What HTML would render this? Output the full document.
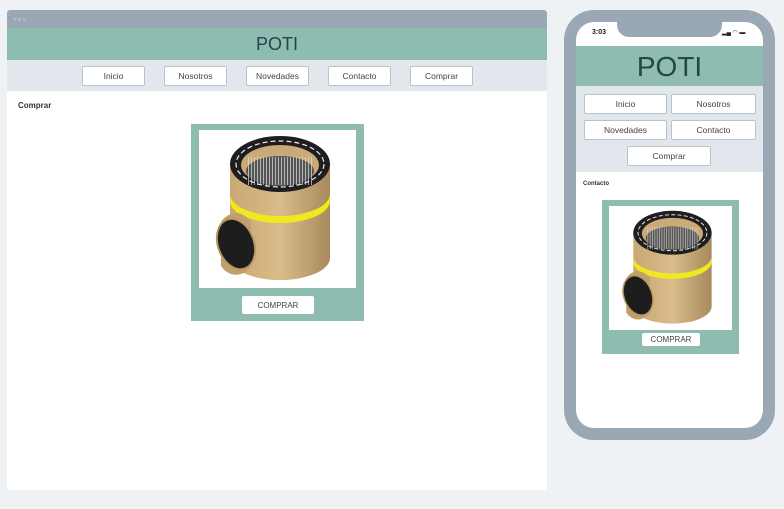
<!DOCTYPE html><html><head><style>
*{margin:0;padding:0;box-sizing:border-box}
body{width:784px;height:509px;background:#eef2f5;position:relative;font-family:"Liberation Sans",sans-serif;overflow:hidden;color:#333}
.a{position:absolute}
.btn{position:absolute;background:#fff;border:1px solid #b9c1ca;border-radius:2px;font-size:8.5px;color:#444;display:flex;align-items:center;justify-content:center;font-family:"Liberation Sans Narrow","Liberation Sans",sans-serif}
</style></head><body>
<svg width="0" height="0" style="position:absolute"><defs>
<linearGradient id="g" x1="0" x2="1"><stop offset="0" stop-color="#c9a874"/><stop offset=".5" stop-color="#d9bc8a"/><stop offset="1" stop-color="#a88a5c"/></linearGradient>
<symbol id="pipe" viewBox="0 0 157 158">
<path d="M31 34 V128 A50 22 0 0 0 131 128 V34 Z" fill="url(#g)"/>
<path d="M31 64 A50 22 0 0 0 131 64 V71 A50 22 0 0 1 31 71Z" fill="#f1e920"/>
<ellipse cx="81" cy="34" rx="50" ry="28" fill="#1e1e1e"/>
<ellipse cx="81" cy="34" rx="44" ry="23" fill="none" stroke="#eee" stroke-width="1.2" stroke-dasharray="5 3"/>
<ellipse cx="81" cy="35" rx="39" ry="20" fill="#c9aa78"/>
<ellipse cx="81" cy="41" rx="34" ry="15" fill="#555" />
<path d="M49 41 H113" stroke="#ddd" stroke-width="28" stroke-dasharray="1 2" opacity=".7"/>
<path d="M22 92 A20 26 0 0 1 52 92 V136 A20 26 0 0 1 22 136Z" fill="#c2a06c"/>
<ellipse cx="37" cy="114" rx="18" ry="26" transform="rotate(-20 37 114)" fill="#1d1d1d" stroke="#b89866" stroke-width="2"/>
</symbol></defs></svg>

<!-- desktop -->
<div class="a" style="left:7px;top:10px;width:540px;height:480px;background:#fff;border-radius:3px;overflow:hidden">
<div class="a" style="left:0;top:0;width:540px;height:18px;background:#9aa8b5"></div>
<div class="a" style="left:6px;top:7px;font-size:6px;color:#b5c0ca;letter-spacing:1px">●●●</div>
<div class="a" style="left:0;top:18px;width:540px;height:32px;background:#8fbcb0;text-align:center;font-size:18px;line-height:32px;color:#23464a">POTI</div>
<div class="a" style="left:0;top:50px;width:540px;height:31px;background:#e2e7ee"></div>
<div class="a" style="left:11px;top:91px;font-size:8px;font-weight:bold;color:#333">Comprar</div>
</div>
<div class="btn" style="left:82px;top:66px;width:63px;height:20px">Inicio</div>
<div class="btn" style="left:164px;top:66px;width:63px;height:20px">Nosotros</div>
<div class="btn" style="left:246px;top:66px;width:63px;height:20px">Novedades</div>
<div class="btn" style="left:328px;top:66px;width:63px;height:20px">Contacto</div>
<div class="btn" style="left:410px;top:66px;width:63px;height:20px">Comprar</div>
<div class="a" style="left:191px;top:124px;width:173px;height:197px;background:#8fbcb0"></div>
<div class="a" style="left:199px;top:130px;width:157px;height:158px;background:#fff"><svg width="157" height="158"><use href="#pipe"/></svg></div>
<div class="btn" style="left:242px;top:296px;width:72px;height:18px;border:none;font-size:8px">COMPRAR</div>

<!-- phone -->
<div class="a" style="left:564px;top:10px;width:211px;height:430px;background:#9aa8b5;border-radius:30px"></div>
<div class="a" style="left:576px;top:22px;width:187px;height:406px;background:#fff;border-radius:18px;overflow:hidden">
<div class="a" style="left:41px;top:0;width:105px;height:15px;background:#9aa8b5;border-radius:0 0 12px 12px"></div>
<div class="a" style="left:16px;top:7px;font-size:7px;font-weight:bold;color:#222">3:03</div>
<div class="a" style="left:146px;top:7px;font-size:6px;color:#222">▂▄ ◠ ▬</div>
<div class="a" style="left:0;top:24px;width:187px;height:40px;background:#8fbcb0;text-align:center;font-size:28px;line-height:42px;color:#23464a">POTI</div>
<div class="a" style="left:0;top:64px;width:187px;height:86px;background:#e2e7ee"></div>
<div class="a" style="left:7px;top:159px;font-size:6px;font-weight:bold;color:#333">Contacto</div>
</div>
<div class="btn" style="left:584px;top:94px;width:83px;height:20px">Inicio</div>
<div class="btn" style="left:671px;top:94px;width:85px;height:20px">Nosotros</div>
<div class="btn" style="left:584px;top:120px;width:83px;height:20px">Novedades</div>
<div class="btn" style="left:671px;top:120px;width:85px;height:20px">Contacto</div>
<div class="btn" style="left:627px;top:146px;width:84px;height:20px">Comprar</div>
<div class="a" style="left:602px;top:200px;width:137px;height:154px;background:#8fbcb0"></div>
<div class="a" style="left:609px;top:206px;width:123px;height:124px;background:#fff"><svg width="123" height="124"><use href="#pipe"/></svg></div>
<div class="btn" style="left:642px;top:333px;width:58px;height:13px;border:none;font-size:8px">COMPRAR</div>
</body></html>
